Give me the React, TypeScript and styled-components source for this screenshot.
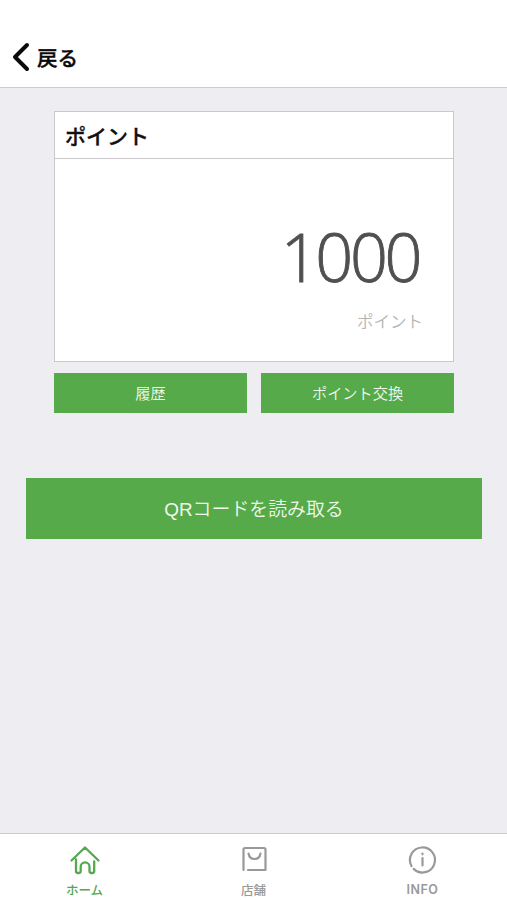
import React from "react";
import styled, { createGlobalStyle } from "styled-components";

const Global = createGlobalStyle`
  *, *::before, *::after { box-sizing: border-box; }
  body { margin: 0; font-family: "Noto Sans CJK JP", sans-serif; }
  button { font: inherit; border: 0; padding: 0; background: none; cursor: pointer; }
`;

const Screen = styled.div`
  display: flex;
  flex-direction: column;
  width: 100%;
  height: 900px;
  overflow: hidden;
  background: #ededf2;
`;

const Header = styled.header`
  display: flex;
  align-items: flex-end;
  flex: none;
  height: 88px;
  padding: 0 12px 14px;
  background: #fff;
  border-bottom: 1px solid #cbcbce;
`;

const BackButton = styled.button`
  display: flex;
  align-items: center;
  gap: 7px;
  height: 32px;
  color: #0a0a0a;
  font-size: 20.5px;
  font-weight: 500;
  line-height: 32px;
  -webkit-text-stroke: 0.4px #0a0a0a;
`;

const Content = styled.main`
  flex: 1;
  padding: 23px 25px 0 26px;
`;

const PointSection = styled.section`
  margin: 0 28px;
`;

const Card = styled.div`
  height: 251px;
  background: #fff;
  border: 1px solid #c9c9cc;
`;

const CardTitle = styled.h1`
  height: 47px;
  margin: 0;
  padding-left: 10px;
  border-bottom: 1px solid #c9c9cc;
  color: #111;
  font-size: 21px;
  font-weight: 500;
  line-height: 46px;
  -webkit-text-stroke: 0.3px #111;
`;

const CardBody = styled.div`
  display: flex;
  flex-direction: column;
  align-items: flex-end;
  padding: 57px 30px 0;
`;

const Amount = styled.div`
  height: 80px;
  margin-right: 4px;
  color: #505050;
  font-family: "Open Sans", sans-serif;
  font-size: 66.5px;
  font-weight: 300;
  line-height: 80px;
  letter-spacing: -3.4px;
  -webkit-text-stroke: 0.9px #505050;
`;

const Unit = styled.div`
  height: 24px;
  margin-top: 13px;
  color: #b5b5b5;
  font-size: 16.5px;
  font-weight: 350;
  line-height: 24px;
`;

const ButtonRow = styled.div`
  display: grid;
  grid-template-columns: 1fr 1fr;
  gap: 14px;
  margin-top: 11px;
`;

const GreenButton = styled.button<{ $large?: boolean }>`
  width: 100%;
  height: ${(p) => (p.$large ? 61 : 40)}px;
  margin-top: ${(p) => (p.$large ? 65 : 0)}px;
  padding-top: ${(p) => (p.$large ? 4 : 2)}px;
  background: #56aa4a;
  color: #eff8ed;
  font-family: "Liberation Sans", "Noto Sans CJK JP", sans-serif;
  font-size: ${(p) => (p.$large ? 18.9 : 15.2)}px;
  font-weight: 350;
  line-height: 1;
`;

const TabBar = styled.nav`
  display: grid;
  grid-template-columns: repeat(3, 1fr);
  flex: none;
  height: 67px;
  background: #fff;
  border-top: 1px solid #cbcbce;
`;

const Tab = styled.button<{ $active?: boolean }>`
  display: flex;
  flex-direction: column;
  align-items: center;
  padding-top: 9px;
  color: ${(p) => (p.$active ? "#53a850" : "#999")};
`;

const TabLabel = styled.span<{ $latin?: boolean }>`
  margin-top: 4px;
  font-family: ${(p) => (p.$latin ? "Inter, sans-serif" : '"Noto Sans CJK JP", sans-serif')};
  font-size: 12.5px;
  font-weight: ${(p) => (p.$latin ? 600 : 500)};
  line-height: 18px;
  letter-spacing: ${(p) => (p.$latin ? 0.5 : 0)}px;
`;

const Icon = styled.svg`
  display: block;
  fill: none;
  stroke: currentColor;
  stroke-linecap: round;
  stroke-linejoin: round;
`;

export default function App() {
  return (
    <Screen>
      <Global />
      <Header>
        <BackButton>
          <Icon width="18" height="30" viewBox="0 0 18 30" strokeWidth="4">
            <path d="M15 3 3 15 15 27" />
          </Icon>
          戻る
        </BackButton>
      </Header>
      <Content>
        <PointSection>
          <Card>
            <CardTitle>ポイント</CardTitle>
            <CardBody>
              <Amount>1000</Amount>
              <Unit>ポイント</Unit>
            </CardBody>
          </Card>
          <ButtonRow>
            <GreenButton>履歴</GreenButton>
            <GreenButton>ポイント交換</GreenButton>
          </ButtonRow>
        </PointSection>
        <GreenButton $large>QRコードを読み取る</GreenButton>
      </Content>
      <TabBar>
        <Tab $active>
          <Icon width="34" height="34" viewBox="0 0 34 34" strokeWidth="2.3">
            <path d="M3.500 17.500 17 4.500 30.500 17.500M8 16.500V28q0 2 2 2h.7q2 0 2-2v-4.200a4.400 4.400 0 0 1 8.800 0V28q0 2 2 2h.7q2 0 2-2V18.500" />
          </Icon>
          <TabLabel>ホーム</TabLabel>
        </Tab>
        <Tab>
          <Icon width="34" height="34" viewBox="0 0 34 34" strokeWidth="2.2">
            <path d="M6.500 27V6.500q0-1.500 1.500-1.500h19q1.500 0 1.500 1.500v20.500H11M11.500 10.500q1 5.500 6 5.500t6-5.500" />
          </Icon>
          <TabLabel>店舗</TabLabel>
        </Tab>
        <Tab>
          <Icon width="34" height="34" viewBox="0 0 34 34" strokeWidth="2.2">
            <path d="M7.700 25.900A12.500 12.500 0 1 0 5.500 23M16.500 15v7.500M16.500 10.500v.8" />
          </Icon>
          <TabLabel $latin>INFO</TabLabel>
        </Tab>
      </TabBar>
    </Screen>
  );
}
